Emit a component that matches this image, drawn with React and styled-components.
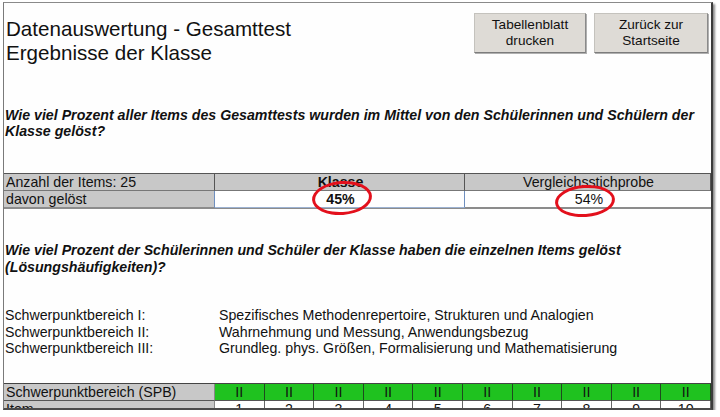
import React from "react";
import styled, { createGlobalStyle } from "styled-components";

const GlobalStyle = createGlobalStyle`
  body {
    margin: 0;
    background: #ffffff;
    font-family: "Liberation Sans", Arial, sans-serif;
    color: #111;
  }
`;

const Frame = styled.div`
  position: relative;
  box-sizing: border-box;
  margin: 2px 0 0 3px;
  width: 710px;
  height: 408px;
  overflow: hidden;
  background: #fefefe;
  border-top: 1px solid #8a8a8a;
  border-left: 1px solid #7a7a7a;
  border-right: 2px solid #3c3c3c;
  border-bottom: 2px solid #4a4a4a;
  box-shadow: 2px 2px 2px rgba(0, 0, 0, 0.45);
`;

const Header = styled.div`
  display: flex;
  justify-content: space-between;
  align-items: flex-start;
`;

const Title = styled.h1`
  margin: 14px 0 0 2px;
  font-size: 20.6px;
  line-height: 24px;
  font-weight: normal;
`;

const Buttons = styled.div`
  display: flex;
  gap: 8px;
  margin: 10px 3px 0 0;
`;

const Btn = styled.button`
  all: unset;
  box-sizing: border-box;
  width: ${(p) => p.w}px;
  height: 40px;
  display: flex;
  align-items: center;
  justify-content: center;
  text-align: center;
  font-family: "Liberation Sans", Arial, sans-serif;
  font-size: 13.6px;
  line-height: 16px;
  color: #111;
  background: #dedbd6;
  border: 1px solid #c4c2bd;
  border-right-color: #8a8a8a;
  border-bottom-color: #7c7c7c;
  box-shadow: 1px 1px 0 #b0b0b0;
`;

const Question = styled.p`
  margin: ${(p) => p.top}px 0 0 1px;
  font-size: 14.2px;
  line-height: ${(p) => p.lh}px;
  font-weight: bold;
  font-style: italic;
  white-space: nowrap;
`;

const SummaryTable = styled.div`
  display: grid;
  grid-template-columns: 211px 250px 1fr;
  margin-top: 34px;
  border-top: 1px solid #555;
  border-bottom: 1px solid #8c8c8c;
`;

const Cell = styled.div`
  position: relative;
  box-sizing: border-box;
  height: 17px;
  line-height: 16px;
  font-size: 14.2px;
  padding-left: 2px;
  text-align: ${(p) => (p.center ? "center" : "left")};
  font-weight: ${(p) => (p.bold ? "bold" : "normal")};
  background: ${(p) => p.bg || "#c8c8c8"};
  border-right: 1px solid ${(p) => p.edge || "#555"};
  border-bottom: 1px solid ${(p) => p.line || "#777"};
  &:last-child {
    border-right: none;
  }
`;

const Mark = styled.span`
  position: absolute;
  left: 50%;
  top: 50%;
  width: 54px;
  height: ${(p) => p.h}px;
  margin: ${(p) => p.dy}px 0 0 -${(p) => p.shift}px;
  border: 3px solid #e3101c;
  border-radius: 50%;
  transform: rotate(-4deg);
  pointer-events: none;
`;

const AreaList = styled.div`
  display: grid;
  grid-template-columns: 214px 1fr;
  margin: 31px 0 0 1px;
  font-size: 14.2px;
  line-height: 16.5px;
`;

const ItemTable = styled.div`
  display: grid;
  grid-template-columns: 211px repeat(10, 1fr);
  margin-top: 26px;
  border-top: 1px solid #444;
`;

const ItemCell = styled.div`
  box-sizing: border-box;
  height: 17px;
  line-height: 16px;
  font-size: 14.2px;
  text-align: center;
  background: ${(p) => (p.green ? "#1fc21f" : "#fff")};
  border-right: 1px solid ${(p) => (p.green ? "#1e4a1e" : "#666")};
  border-bottom: 1px solid #555;
`;

const ItemLabel = styled(ItemCell)`
  text-align: left;
  padding-left: 2px;
  background: #c8c8c8;
  border-right: 1px solid #888;
`;

const areas = [
  ["Schwerpunktbereich I:", "Spezifisches Methodenrepertoire, Strukturen und Analogien"],
  ["Schwerpunktbereich II:", "Wahrnehmung und Messung, Anwendungsbezug"],
  ["Schwerpunktbereich III:", "Grundleg. phys. Größen, Formalisierung und Mathematisierung"],
];

const items = [1, 2, 3, 4, 5, 6, 7, 8, 9, 10];

export default function App() {
  return (
    <>
      <GlobalStyle />
      <Frame>
        <Header>
          <Title>
            Datenauswertung - Gesamttest
            <br />
            Ergebnisse der Klasse
          </Title>
          <Buttons>
            <Btn w={112}>
              Tabellenblatt
              <br />
              drucken
            </Btn>
            <Btn w={114}>
              Zurück zur
              <br />
              Startseite
            </Btn>
          </Buttons>
        </Header>

        <Question top={42} lh={16}>
          Wie viel Prozent aller Items des Gesamttests wurden im Mittel von den Schülerinnen und Schülern der
          <br />
          Klasse gelöst?
        </Question>

        <SummaryTable>
          <Cell>Anzahl der Items: 25</Cell>
          <Cell center bold>Klasse</Cell>
          <Cell center>Vergleichsstichprobe</Cell>
          <Cell line="#8c8c8c" edge="#6f8fbf">davon gelöst</Cell>
          <Cell center bold bg="#fff" line="#9cb2d2" edge="#6f8fbf">
            45%
            <Mark shift={28} h={28} dy={-18} />
          </Cell>
          <Cell center bg="#fff" line="#8c8c8c">
            54%
            <Mark shift={33} h={26} dy={-14} />
          </Cell>
        </SummaryTable>

        <Question top={33} lh={17}>
          Wie viel Prozent der Schülerinnen und Schüler der Klasse haben die einzelnen Items gelöst
          <br />
          (Lösungshäufigkeiten)?
        </Question>

        <AreaList>
          {areas.map(([name, text]) => (
            <React.Fragment key={name}>
              <span>{name}</span>
              <span>{text}</span>
            </React.Fragment>
          ))}
        </AreaList>

        <ItemTable>
          <ItemLabel>Schwerpunktbereich (SPB)</ItemLabel>
          {items.map((n) => (
            <ItemCell green key={"s" + n}>II</ItemCell>
          ))}
          <ItemLabel>Item</ItemLabel>
          {items.map((n) => (
            <ItemCell key={"i" + n}>{n}</ItemCell>
          ))}
        </ItemTable>
      </Frame>
    </>
  );
}
